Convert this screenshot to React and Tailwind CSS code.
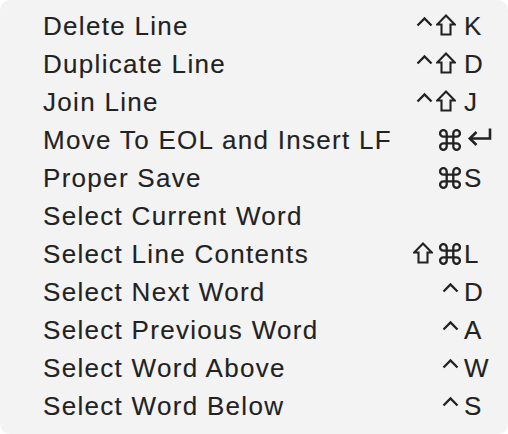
import React from "react";

const Caret = () => (
  <svg width="17" height="24" viewBox="0 0 17 24" className="mr-[3px]" fill="none" stroke="#222" strokeWidth="2.3">
    <polyline points="1.5,11.5 8.5,4.5 15.5,11.5" />
  </svg>
);

const Shift = () => (
  <svg width="20" height="24" viewBox="0 0 20 24" className="mr-[6px]" fill="none" stroke="#222" strokeWidth="2.1" strokeLinejoin="miter">
    <path d="M10 1.5 L18.8 10.5 H14.5 V20.5 H5.5 V10.5 H1.2 Z" />
  </svg>
);

const Cmd = () => (
  <svg width="22" height="22" viewBox="2 2 20 20" className="mr-[1px]" fill="none" stroke="#222" strokeWidth="2.1">
    <path d="M15 6v12a3 3 0 1 0 3-3H6a3 3 0 1 0 3 3V6a3 3 0 1 0-3 3h12a3 3 0 1 0-3-3" />
  </svg>
);

const Return = () => (
  <svg width="27" height="24" viewBox="0 0 27 24" className="ml-[2px]" fill="none" stroke="#222" strokeWidth="2.6">
    <path d="M24 0.5 V10.5 H4" />
    <path d="M10.5 4 L3.8 10.5 L10.5 17" />
  </svg>
);

const modIcons = { ctrl: Caret, shift: Shift, cmd: Cmd };

const items = [
  { label: "Delete Line", mods: ["ctrl", "shift"], key: "K" },
  { label: "Duplicate Line", mods: ["ctrl", "shift"], key: "D" },
  { label: "Join Line", mods: ["ctrl", "shift"], key: "J" },
  { label: "Move To EOL and Insert LF", mods: ["cmd"], key: "return" },
  { label: "Proper Save", mods: ["cmd"], key: "S" },
  { label: "Select Current Word", mods: [], key: "" },
  { label: "Select Line Contents", mods: ["shift", "cmd"], key: "L" },
  { label: "Select Next Word", mods: ["ctrl"], key: "D" },
  { label: "Select Previous Word", mods: ["ctrl"], key: "A" },
  { label: "Select Word Above", mods: ["ctrl"], key: "W" },
  { label: "Select Word Below", mods: ["ctrl"], key: "S" },
];

export default function App() {
  return (
    <div className="w-[508px] h-[434px] bg-white">
      <div
        className="w-full h-full bg-[#f3f3f3] rounded-[10px] pt-[7px] text-[#222] text-[26px] leading-[38px] [-webkit-text-stroke:0.12px_#222]"
        style={{ fontFamily: '"Liberation Sans", Arial, sans-serif' }}
      >
        {items.map((it) => (
          <div key={it.label} className="flex items-center pl-[43px] h-[38px]">
            <span className="flex-1 tracking-[1.3px] whitespace-nowrap">{it.label}</span>
            <span className="flex items-center justify-end pr-[2px]">
              {it.mods.map((m, i) => {
                const Icon = modIcons[m];
                return <Icon key={i} />;
              })}
            </span>
            <span className="w-[44px] flex items-center">
              {it.key === "return" ? <Return /> : it.key}
            </span>
          </div>
        ))}
      </div>
    </div>
  );
}
